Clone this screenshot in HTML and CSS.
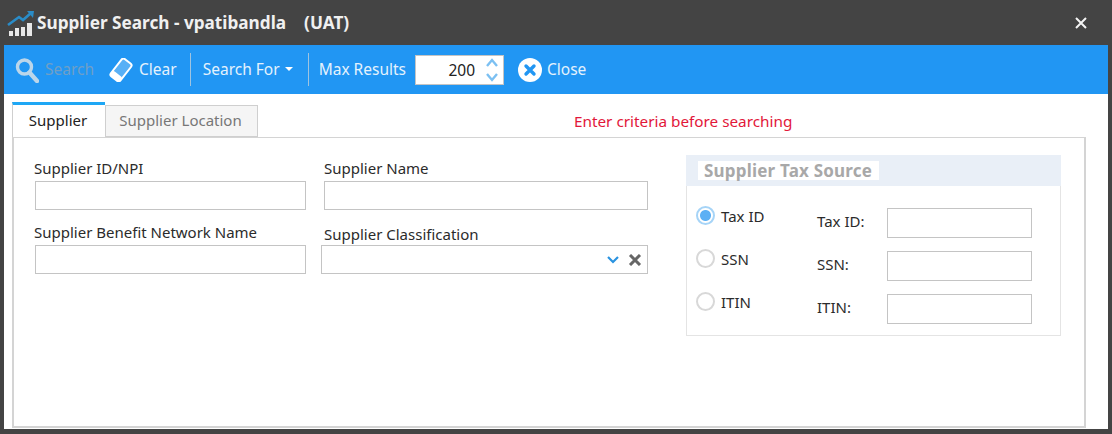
FILE: index.html
```html
<!DOCTYPE html>
<html>
<head>
  <title>Supplier Search</title>
  <link rel="stylesheet" href="styles.css">
</head>
<body>
  <div class="window">
    <!-- title bar -->
    <div class="titlebar">
      <svg class="app-icon" width="28" height="26" viewBox="0 0 28 26">
        <path d="M1 15 L12 7 L16 10 L24 3" fill="none" stroke="#2a8cc8" stroke-width="2.600"/>
        <path d="M20 1 L27 1 L26 8 Z" fill="#2a8cc8"/>
        <rect x="2" y="21" width="4" height="6" fill="#e8e8e8"/>
        <rect x="8" y="18" width="4" height="9" fill="#e8e8e8"/>
        <rect x="14" y="17" width="4" height="10" fill="#e8e8e8"/>
        <rect x="20" y="13" width="5" height="14" fill="#e8e8e8"/>
      </svg>
      <span class="title">Supplier Search - vpatibandla</span>
      <span class="title env">(UAT)</span>
      <svg class="win-close" width="12" height="12" viewBox="0 0 12 12">
        <path d="M1 1 L11 11 M11 1 L1 11" stroke="#f4f4f4" stroke-width="2"/>
      </svg>
    </div>

    <div class="content">
      <!-- toolbar -->
      <div class="toolbar">
        <div class="tool disabled">
          <svg width="24" height="26" viewBox="0 0 24 26">
            <circle cx="9.500" cy="10" r="7" fill="none" stroke="#bcd6ea" stroke-width="3.400"/>
            <path d="M14.500 15.500 L22 24" stroke="#bcd6ea" stroke-width="4.400" stroke-linecap="round"/>
          </svg>
          <span class="search-label">Search</span>
        </div>
        <div class="tool clear-tool">
          <svg width="24" height="24" viewBox="0 0 24 24">
            <g transform="rotate(-52 12 12)">
              <rect x="1" y="6" width="22" height="12" rx="2.500" fill="#58b0f6" stroke="#ffffff" stroke-width="2"/>
              <rect x="1" y="6" width="6" height="12" rx="2" fill="#ffffff"/>
            </g>
          </svg>
          <span>Clear</span>
        </div>
        <div class="sep"></div>
        <div class="tool search-for">
          <span>Search For</span>
          <span class="caret"></span>
        </div>
        <div class="sep"></div>
        <div class="tool max-results">
          <span>Max Results</span>
          <div class="spinner">
            <span class="spin-value">200</span>
            <svg width="14" height="26" viewBox="0 0 14 26">
              <path d="M2 9 L7 3 L12 9" fill="none" stroke="#7cc0f2" stroke-width="2.400"/>
              <path d="M2 17 L7 23 L12 17" fill="none" stroke="#7cc0f2" stroke-width="2.400"/>
            </svg>
          </div>
        </div>
        <div class="tool close-tool">
          <svg width="24" height="24" viewBox="0 0 24 24">
            <circle cx="12" cy="12" r="12" fill="#fff"/>
            <path d="M8 8 L16 16 M16 8 L8 16" stroke="#2196f3" stroke-width="3.400" stroke-linecap="round"/>
          </svg>
          <span>Close</span>
        </div>
      </div>

      <!-- tabs -->
      <div class="tab-row">
        <div class="tab active">Supplier</div>
        <div class="tab">Supplier Location</div>
        <div class="message">Enter criteria before searching</div>
      </div>

      <div class="tab-panel">
        <div class="form-grid">
          <div class="field">
            <label>Supplier ID/NPI</label>
            <div class="text-box"></div>
          </div>
          <div class="field wide">
            <label>Supplier Name</label>
            <div class="text-box"></div>
          </div>
          <div class="field">
            <label>Supplier Benefit Network Name</label>
            <div class="text-box"></div>
          </div>
          <div class="field wide combo-field">
            <label>Supplier Classification</label>
            <div class="text-box combo">
              <svg width="14" height="10" viewBox="0 0 14 10">
                <path d="M2 2 L7 7 L12 2" fill="none" stroke="#2a93e0" stroke-width="2.200"/>
              </svg>
              <svg width="14" height="12" viewBox="0 0 14 12">
                <path d="M2 1 L12 11 M12 1 L2 11" stroke="#666" stroke-width="3"/>
              </svg>
            </div>
          </div>
        </div>

        <div class="tax-group">
          <div class="tax-header"><span class="legend">Supplier Tax Source</span></div>
          <div class="tax-body">
            <div class="tax-row">
              <span class="radio checked"></span>
              <span class="radio-label">Tax ID</span>
              <span class="tax-label">Tax ID:</span>
              <div class="text-box tax-box"></div>
            </div>
            <div class="tax-row">
              <span class="radio"></span>
              <span class="radio-label">SSN</span>
              <span class="tax-label">SSN:</span>
              <div class="text-box tax-box"></div>
            </div>
            <div class="tax-row">
              <span class="radio"></span>
              <span class="radio-label">ITIN</span>
              <span class="tax-label">ITIN:</span>
              <div class="text-box tax-box"></div>
            </div>
          </div>
        </div>
      </div>
    </div>
  </div>
</body>
</html>
```
FILE: styles.css
```css
body {
  margin: 0;
  background-color: #444444;
  font-family: 'Noto Sans', 'Open Sans', sans-serif;
  font-size: 15px;
  color: #2b2b2b;
}
.window {
  width: 1112px;
  height: 434px;
  padding: 0 4px 5px 4px;
  box-sizing: border-box;
  display: flex;
  flex-direction: column;
}
.titlebar {
  height: 45px;
  flex: none;
  display: flex;
  align-items: center;
  color: #f0f0f0;
  font-weight: bold;
  font-size: 17.2px;
  padding-left: 3px;
}
.app-icon {
  margin-right: 2px;
}
.title {
  white-space: pre;
}
.env {
  margin-left: 18px;
}
.win-close {
  margin-left: auto;
  margin-right: 21px;
}
.content {
  flex: 1;
  background-color: #ffffff;
  display: flex;
  flex-direction: column;
}
.toolbar {
  height: 49px;
  flex: none;
  background-color: #2196f3;
  display: flex;
  align-items: center;
  color: #e4f2fd;
  font-size: 15.5px;
  padding-left: 11px;
}
.tool {
  display: flex;
  align-items: center;
}
.tool > span {
  margin-bottom: 2px;
}
.search-label {
  color: #6f9fc6;
  margin-left: 6px;
}
.clear-tool {
  margin-left: 15px;
}
.clear-tool span {
  margin-left: 6px;
}
.sep {
  width: 1px;
  height: 33px;
  background-color: #9fc4e0;
  margin: 0 12px 0 13px;
}
.search-for {
  margin-right: 2px;
}
.caret {
  width: 0;
  height: 0;
  border-left: 4px solid transparent;
  border-right: 4px solid transparent;
  border-top: 4px solid #ffffff;
  margin-left: 5px;
}
.max-results {
  margin-left: -2px;
}
.spinner {
  width: 89px;
  height: 30px;
  box-sizing: border-box;
  margin-left: 9px;
  background-color: #ffffff;
  border: 1px solid #c4c4c4;
  display: flex;
  align-items: center;
  justify-content: flex-end;
  color: #222222;
  padding-right: 4px;
}
.spin-value {
  margin-right: 10px;
}
.close-tool {
  margin-left: 14px;
}
.close-tool span {
  margin-left: 5px;
}
.tab-row {
  height: 43px;
  flex: none;
  display: flex;
  align-items: flex-end;
  padding-left: 8px;
  position: relative;
  z-index: 1;
}
.tab {
  height: 32px;
  box-sizing: border-box;
  width: 153px;
  background-color: #f5f5f5;
  border: 1px solid #cfcfcf;
  display: flex;
  align-items: center;
  justify-content: center;
  color: #777777;
  padding: 0 2px 2px 0;
}
.tab.active {
  height: 35px;
  width: 93px;
  background-color: #ffffff;
  border: 0;
  border-top: 3px solid #1ea7f5;
  border-left: 1px solid #cfcfcf;
  color: #222222;
}
.message {
  color: #e2173a;
  font-size: 15.3px;
  margin-left: 316px;
  margin-bottom: 6px;
}
.tab-panel {
  flex: none;
  height: 291px;
  margin-left: 8px;
  width: 1074px;
  box-sizing: border-box;
  border: 2px solid #d4d4d4;
  border-top-width: 1px;
  display: flex;
  align-items: flex-start;
  position: relative;
}
.form-grid {
  display: grid;
  grid-template-columns: 271px 327px;
  column-gap: 15px;
  row-gap: 12px;
  padding: 20px 0 0 21px;
}
.field label {
  display: block;
  height: 23px;
  line-height: 20px;
  margin-left: -1px;
  white-space: nowrap;
}
.text-box {
  height: 29px;
  box-sizing: border-box;
  background-color: #ffffff;
  border: 1px solid #c4c4c4;
}
.wide label {
  margin-left: 3px;
}
.combo-field label {
  line-height: 24px;
}
.field.wide .text-box {
  margin-left: 3px;
}
.combo-field .text-box.combo {
  margin-left: 0;
  display: flex;
  align-items: center;
  justify-content: flex-end;
  gap: 8px;
  padding-right: 5px;
}
.tax-group {
  width: 375px;
  height: 181px;
  box-sizing: border-box;
  margin: 17px 0 0 38px;
  border: 1px solid #e4e4e4;
  border-top: 0;
}
.tax-header {
  height: 31px;
  box-sizing: border-box;
  background-color: #e9eff7;
  margin: 0 -1px;
  padding: 6px 0 0 12px;
}
.legend {
  display: inline-block;
  width: 181px;
  box-sizing: border-box;
  background-color: #ffffff;
  color: #a8a8a8;
  font-weight: bold;
  font-size: 17px;
  line-height: 19px;
  letter-spacing: 0.2px;
  padding: 0 6px;
  white-space: nowrap;
}
.tax-body {
  padding-top: 22px;
  display: flex;
  flex-direction: column;
  gap: 13px;
}
.tax-row {
  height: 30px;
  display: flex;
  align-items: center;
  padding-left: 9px;
}
.radio {
  width: 19px;
  height: 19px;
  box-sizing: border-box;
  border: 2px solid #d8d8d8;
  border-radius: 50%;
  background-color: #ffffff;
  margin-bottom: 15px;
}
.radio.checked {
  border-color: #a6d4f7;
  background: radial-gradient(circle, #5cb0f4 0 5px, #ffffff 6px);
}
.radio-label {
  width: 96px;
  margin-left: 6px;
  margin-bottom: 14px;
}
.tax-label {
  width: 70px;
  margin-bottom: 4px;
}
.tax-box {
  width: 145px;
  height: 30px;
}
```
